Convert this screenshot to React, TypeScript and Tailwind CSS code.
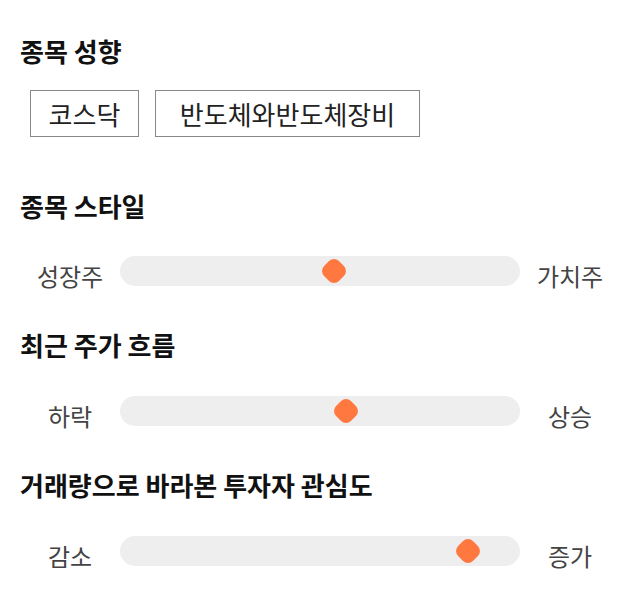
const font = { fontFamily: '"Noto Sans CJK KR", "Noto Sans", sans-serif' };

type SliderProps = { left: string; right: string; value: number };

function StyleSlider({ left, right, value }: SliderProps) {
  return (
    <div className="flex h-[30px] items-center">
      <span className="w-[100px] pt-[10px] text-center text-[24px] leading-[20px] text-[#444]">{left}</span>
      <div className="relative h-[30px] flex-1 rounded-full bg-[#eeeeee]">
        <div
          className="absolute top-1/2 h-[21px] w-[21px] -translate-x-1/2 -translate-y-1/2 rotate-45 rounded-[7px] bg-[#ff7840]"
          style={{ left: `${value}%` }}
        />
      </div>
      <span className="w-[100px] pt-[10px] text-center text-[24px] leading-[20px] text-[#444]">{right}</span>
    </div>
  );
}

export default function App() {
  return (
    <div className="min-h-screen w-full bg-white px-5 pt-[35px]" style={font}>
      <h2 className="text-[26px] font-bold leading-8 text-[#111]">종목 성향</h2>
      <div className="mt-[23px] flex gap-4 pl-[10px]">
        <span className="w-[109px] border border-[#888] py-[5px] text-center text-[26px] leading-[35px] text-[#222]">코스닥</span>
        <span className="w-[265px] border border-[#888] py-[5px] text-center text-[26px] leading-[35px] text-[#222]">반도체와반도체장비</span>
      </div>

      <h2 className="mt-[53px] text-[26px] font-bold leading-8 text-[#111]">종목 스타일</h2>
      <div className="mt-[34px]">
        <StyleSlider left="성장주" right="가치주" value={53.5} />
      </div>

      <h2 className="mt-[43px] text-[26px] font-bold leading-8 text-[#111]">최근 주가 흐름</h2>
      <div className="mt-[35px]">
        <StyleSlider left="하락" right="상승" value={56.5} />
      </div>

      <h2 className="mt-[43px] text-[26px] font-bold leading-8 text-[#111]">거래량으로 바라본 투자자 관심도</h2>
      <div className="mt-[35px]">
        <StyleSlider left="감소" right="증가" value={87} />
      </div>
    </div>
  );
}
